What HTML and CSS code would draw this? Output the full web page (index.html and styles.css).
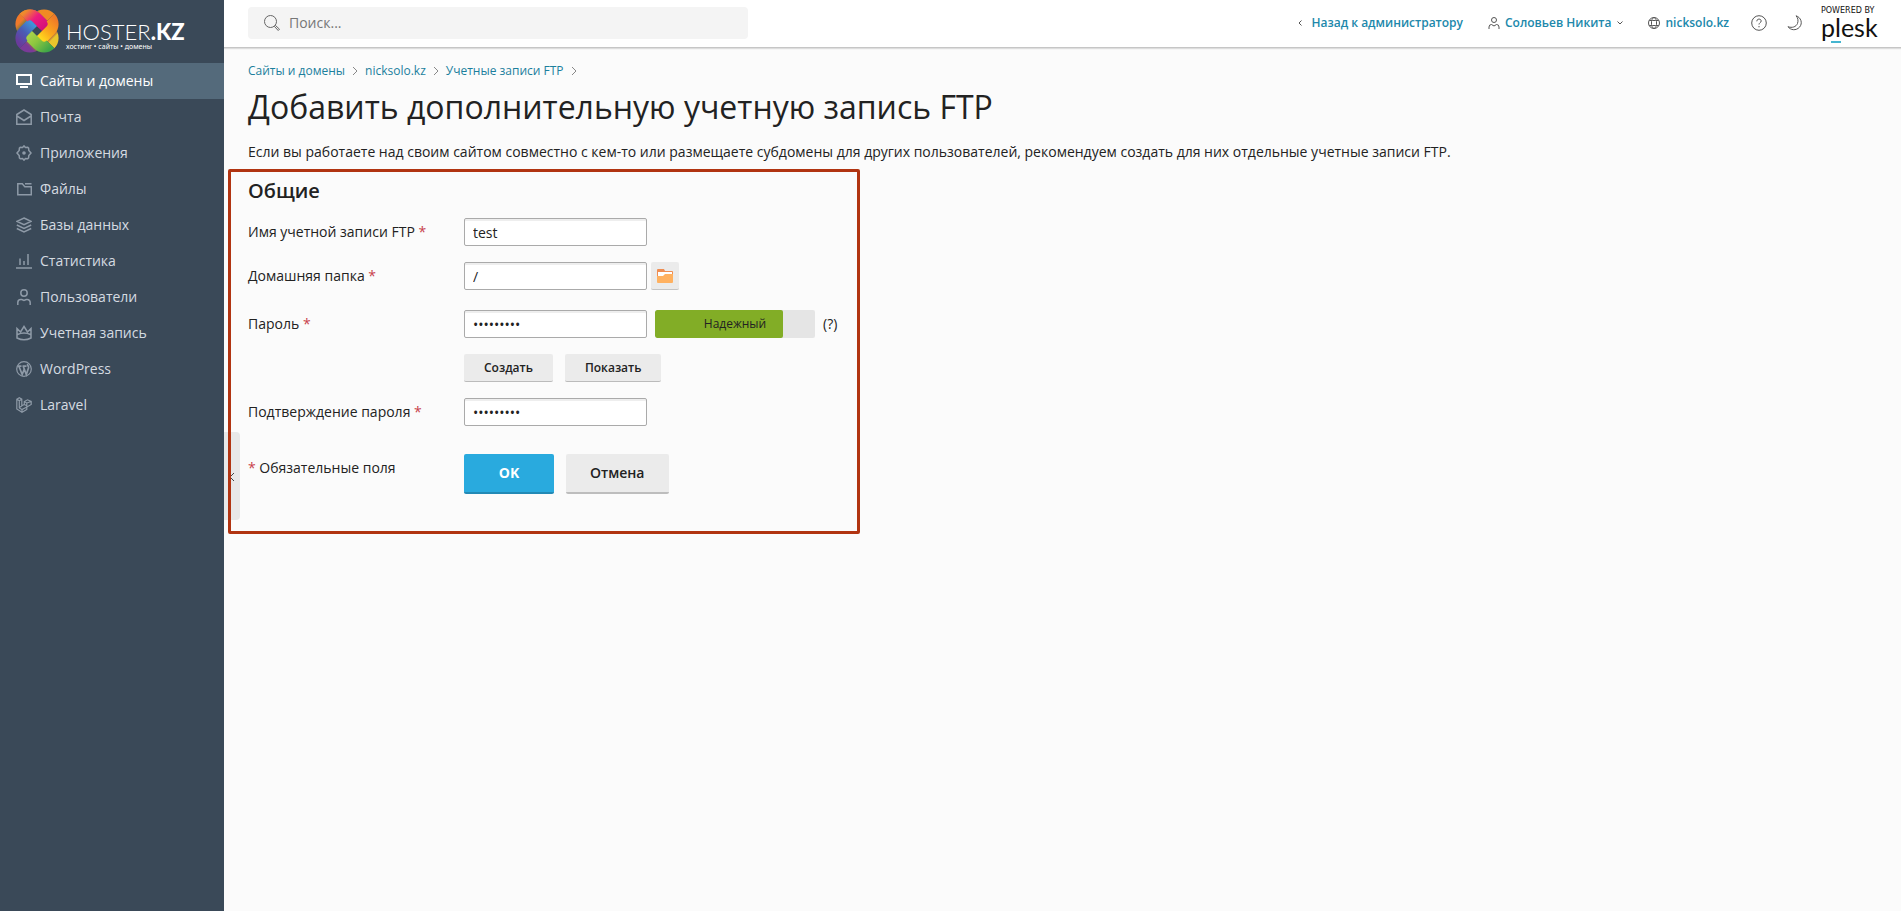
FILE: index.html
```html
<!DOCTYPE html>
<html lang="ru">
<head>
<meta charset="utf-8">
<title>Добавить дополнительную учетную запись FTP</title>
<link rel="stylesheet" href="styles.css">
</head>
<body>
<div class="app">
  <aside class="sidebar">
    <a class="logo" href="#">
      <svg class="logo-mark" viewBox="0 0 42 42" aria-hidden="true">
        <defs>
          <linearGradient id="pink" gradientUnits="userSpaceOnUse" x1="-24" x2="24" y1="0" y2="0"><stop offset=".05" stop-color="#f08a2c"/><stop offset=".28" stop-color="#ec1c7f"/><stop offset=".55" stop-color="#d5107a"/><stop offset=".75" stop-color="#8a1450"/><stop offset=".85" stop-color="#e9c62c"/></linearGradient>
          <linearGradient id="yellow" gradientUnits="userSpaceOnUse" x1="-24" x2="24" y1="0" y2="0"><stop offset=".05" stop-color="#ee7a28"/><stop offset=".35" stop-color="#fba91c"/><stop offset=".55" stop-color="#ffd81e"/><stop offset=".72" stop-color="#b98a10"/><stop offset=".85" stop-color="#7a3a98"/></linearGradient>
          <linearGradient id="green" gradientUnits="userSpaceOnUse" x1="-24" x2="24" y1="0" y2="0"><stop offset=".05" stop-color="#3fa648"/><stop offset=".35" stop-color="#8cc63f"/><stop offset=".55" stop-color="#a8d14a"/><stop offset=".72" stop-color="#2b7a48"/><stop offset=".88" stop-color="#f0792a"/></linearGradient>
          <linearGradient id="blue" gradientUnits="userSpaceOnUse" x1="-24" x2="24" y1="0" y2="0"><stop offset=".05" stop-color="#6a3a9c"/><stop offset=".3" stop-color="#4a5cb4"/><stop offset=".55" stop-color="#3f96da"/><stop offset=".72" stop-color="#1d4c86"/><stop offset=".82" stop-color="#f08a24"/></linearGradient>
        </defs>
        <g fill="none" stroke-width="11" transform="translate(21 21)">
          <path transform="rotate(45)" d="M-19 0a9 9 0 0 1 9-9H10a9 9 0 0 1 9 9" stroke="url(#pink)"/>
          <path transform="rotate(135)" d="M-19 0a9 9 0 0 1 9-9H10a9 9 0 0 1 9 9" stroke="url(#yellow)"/>
          <path transform="rotate(225)" d="M-19 0a9 9 0 0 1 9-9H10a9 9 0 0 1 9 9" stroke="url(#green)"/>
          <path transform="rotate(315)" d="M-19 0a9 9 0 0 1 9-9H10a9 9 0 0 1 9 9" stroke="url(#blue)"/>
          <path transform="rotate(45)" d="M-19 0a9 9 0 0 1 9-9H0" stroke="url(#pink)"/>
        </g>
      </svg>
      <span class="logo-words">
        <span class="logo-name">HOSTER<b>.KZ</b></span>
        <span class="logo-sub">хостинг • сайты • домены</span>
      </span>
    </a>
    <nav class="menu">
      <a class="menu-item active" href="#"><svg class="ico" viewBox="0 0 16 16"><path d="M1 2h14v9H1zM4 14h8" stroke-width="2"/></svg>Сайты и домены</a>
      <a class="menu-item" href="#"><svg class="ico" viewBox="0 0 16 16"><path d="M.8 15.200V5.500L8 1l7.200 4.500v9.700zM1 7l7 4.500L15 7"/></svg>Почта</a>
      <a class="menu-item" href="#"><svg class="ico" viewBox="0 0 16 16"><path d="M6.500 2.500L8 .9l1.500 1.600 2.200-.2.900.9.200 2.300L15 8l-2.200 2.500-.2 2.300-.9.900-2.200-.2L8 15.100l-1.500-1.600-2.200.2-.9-.9-.2-2.300L1 8l2.200-2.500.2-2.300.9-.9z"/><circle cx="8" cy="8" r="1.800" fill="#8e9aa7" stroke="none"/></svg>Приложения</a>
      <a class="menu-item" href="#"><svg class="ico" viewBox="0 0 16 16"><path d="M1.800 2.800h4.500l2.500 3h6.500v8H1.800zM9 2.800h6.500"/></svg>Файлы</a>
      <a class="menu-item" href="#"><svg class="ico" viewBox="0 0 16 16"><path d="M8 1l7 3.300-7 3.400-7-3.400zM.8 8L8 11.400 15.200 8M.8 11.500L8 15l7.200-3.500"/></svg>Базы данных</a>
      <a class="menu-item" href="#"><svg class="ico" viewBox="0 0 16 16"><path d="M0 15h16M4 12V5.500M8 12V8M12 12V1"/></svg>Статистика</a>
      <a class="menu-item" href="#"><svg class="ico" viewBox="0 0 16 16"><circle cx="8" cy="4" r="3.200"/><path d="M1.800 16v-2.500a3 3 0 0 1 3-3h1L8 11.500l2.200-1h1a3 3 0 0 1 3 3V16"/></svg>Пользователи</a>
      <a class="menu-item" href="#"><svg class="ico" viewBox="0 0 16 16"><path d="M1 3.500L4.500 7 8 1.500 11.500 7 15 3.500V13q-7 3.500-14 0zM1.500 9.500q6.500-3 13 0"/></svg>Учетная запись</a>
      <a class="menu-item" href="#"><svg class="ico" viewBox="0 0 16 16"><circle cx="8" cy="8" r="7.300" stroke-width="1.200"/><path d="M2 5.200h3.500M6.500 5.200h4M3 5.500l3.200 8L8.300 8M7.300 5.500l3 8 2.200-6.500c.5-2-1.500-2.500-.8-4" stroke-width="1.700"/></svg>WordPress</a>
      <a class="menu-item" href="#"><svg class="ico" viewBox="0 0 16 16"><path d="M.8 2.200L3.300.8l2.500 1.400v6.600l2.500-1.400V4.500L11.500 2.800l3.700 1.700v3L10.800 10v2.500L6 15.200.8 12zM.8 2.200l2.500 1.500v7.200L6 12.500l4.800-2.500M3.300 3.700l2.500-1.500M6 12.500v2.700M8.300 4.500l2.500 1.500v4M10.800 6l4.400-1.500M8.300 7.400l2.500 1.400M3.300 10.500l2.500-1.600" stroke-width="1.200"/></svg>Laravel</a>
    </nav>
    <button class="collapse" type="button" aria-label="Свернуть меню"><svg viewBox="0 0 6 8"><path d="M5 0L1 4l4 4"/></svg></button>
  </aside>

  <div class="page">
    <header class="topbar">
      <label class="search">
        <svg class="search-ico" viewBox="0 0 16 16"><circle cx="6.500" cy="6.500" r="6"/><path d="M10.500 11.500l1-1 4 3.700-1.300 1.300z"/></svg>
        <input type="search" placeholder="Поиск..." aria-label="Поиск">
      </label>
      <div class="tools">
        <a class="tool back" href="#"><svg class="arrow-left" viewBox="0 0 4 6"><path d="M3.500.5L1 3l2.500 2.500"/></svg>Назад к администратору</a>
        <a class="tool user" href="#"><svg class="tool-ico" viewBox="0 0 12 12"><circle cx="6" cy="3" r="2.500"/><path d="M1 12v-2a2.500 2.500 0 0 1 2.500-2.500L6 9l2.500-1.500A2.500 2.500 0 0 1 11 10v2"/></svg>Соловьев Никита<svg class="arrow-down" viewBox="0 0 6 4"><path d="M.5.5L3 3 5.500.5"/></svg></a>
        <a class="tool site" href="#"><svg class="tool-ico" viewBox="0 0 12 12"><circle cx="6" cy="6" r="5.500"/><rect x="3.500" y="3.500" width="5" height="5" rx="1"/><path d="M3.500 4C4 2 5 .8 6 .5 7 .8 8 2 8.500 4M3.500 8C4 10 5 11.200 6 11.500 7 11.200 8 10 8.500 8M1.300 3.500h2.500M8.200 3.500h2.500M1.300 8.500h2.500M8.200 8.500h2.500"/></svg>nicksolo.kz</a>
        <button class="icon-btn" type="button" aria-label="Справка"><svg viewBox="0 0 16 16"><circle cx="8" cy="8" r="7.300"/><path d="M5.800 6.300C5.800 3.300 10.200 3.500 10.200 6 10.200 7.600 8 7.800 8 9.500M8 11v1.300"/></svg></button>
        <button class="icon-btn moon" type="button" aria-label="Тёмная тема"><svg viewBox="0 0 16 16"><path d="M9 .8c5 1.500 7 7.500 3.500 11.400-3.500 3.800-9 3-11.500-.5 4 1.500 8 .3 9.500-3.200C11.500 5.500 11 3 9 .8z"/></svg></button>
        <a class="plesk" href="#"><span class="powered">POWERED BY</span><span class="plesk-name">plesk</span></a>
      </div>
    </header>

    <main class="content">
      <nav class="crumbs" aria-label="Навигация">
        <a href="#">Сайты и домены</a><svg viewBox="0 0 6 10"><path d="M1 1l4 4-4 4"/></svg>
        <a href="#">nicksolo.kz</a><svg viewBox="0 0 6 10"><path d="M1 1l4 4-4 4"/></svg>
        <a href="#">Учетные записи FTP</a><svg viewBox="0 0 6 10"><path d="M1 1l4 4-4 4"/></svg>
      </nav>
      <h1>Добавить дополнительную учетную запись FTP</h1>
      <p class="intro">Если вы работаете над своим сайтом совместно с кем-то или размещаете субдомены для других пользователей, рекомендуем создать для них отдельные учетные записи FTP.</p>

      <form class="panel">
        <h2>Общие</h2>
        <div class="row">
          <label for="login">Имя учетной записи FTP <i>*</i></label>
          <div class="field"><input id="login" type="text" value="test"></div>
        </div>
        <div class="row home-row">
          <label for="home">Домашняя папка <i>*</i></label>
          <div class="field"><input id="home" type="text" value="/"><button class="folder" type="button" aria-label="Выбрать папку"><svg viewBox="0 0 16 14"><path fill="#ef8d52" d="M0 1a1 1 0 0 1 1-1h6l1 2h7a1 1 0 0 1 1 1v4H0z"/><path fill="#fff" d="M1 3h14v4H1z"/><path fill="#ffb160" d="M0 7h6l2-2h8v8a1 1 0 0 1-1 1H1a1 1 0 0 1-1-1z"/></svg></button></div>
        </div>
        <div class="row">
          <label for="pass">Пароль <i>*</i></label>
          <div class="field"><input id="pass" type="password" value="password1"><span class="strength"><span class="strength-bar"></span><span class="strength-text">Надежный</span></span><span class="hint">(?)</span></div>
        </div>
        <div class="row">
          <span></span>
          <div class="field actions"><button class="small-btn" type="button">Создать</button><button class="small-btn" type="button">Показать</button></div>
        </div>
        <div class="row last">
          <label for="confirm">Подтверждение пароля <i>*</i></label>
          <div class="field"><input id="confirm" type="password" value="password1"></div>
        </div>
        <div class="row">
          <span class="required"><i>*</i> Обязательные поля</span>
          <div class="field actions"><button class="btn primary" type="submit">OK</button><button class="btn" type="button">Отмена</button></div>
        </div>
      </form>
    </main>
  </div>
</div>
</body>
</html>
```
FILE: styles.css
```css
* { box-sizing: border-box; }
body { margin: 0; font: 14px/20px "Open Sans", "Noto Sans", sans-serif; color: #222; background: #fbfbfb; }
a { color: #1c7f9d; text-decoration: none; }
button, input { font: inherit; color: inherit; }
button { cursor: pointer; border: 0; padding: 0; }
svg { flex: none; fill: none; stroke: currentColor; }
.app { display: flex; min-height: 100vh; }

.sidebar { position: relative; flex: none; width: 224px; background: #3a4958; }
.logo { display: flex; height: 63px; padding: 10px 0 0 16px; gap: 8px; color: #fff; }
.logo-mark { width: 42px; height: 42px; overflow: visible; }
.logo-words { display: flex; flex-direction: column; font-family: Lato, sans-serif; padding-top: 10px; }
.logo-name { font-size: 22px; line-height: 23px; font-weight: 300; }
.logo-name b { font-weight: 900; }
.logo-sub { font: 7px/8px "Noto Sans", sans-serif; }
.menu-item { display: flex; align-items: center; gap: 8px; height: 36px; padding-left: 16px; padding-bottom: 1px; color: #d5dbe1; font-weight: 500; }
.menu-item.active { background: #546a7b; color: #fff; }
.ico { width: 16px; height: 16px; stroke: #8e9aa7; stroke-width: 1.5; }
.active .ico { stroke: #fff; }
.collapse { position: absolute; left: 100%; top: 432px; width: 16px; height: 88px; border-radius: 0 4px 4px 0; background: #e8e8e8; color: #444; }
.collapse svg { width: 6px; height: 8px; }

.page { flex: 1; min-width: 0; }
.topbar { display: flex; justify-content: space-between; height: 48px; padding: 7px 20px 0 24px; background: #fff; border-bottom: 1px solid #c6c6c6; box-shadow: 0 1px 1px #ddd; }
.search { display: flex; align-items: center; gap: 9px; width: 500px; height: 32px; padding-left: 16px; border-radius: 4px; background: #f4f4f4; }
.search-ico { width: 16px; height: 16px; stroke: #666; }
.search input { flex: 1; border: 0; padding: 0; background: none; outline: 0; }
.search input::placeholder { color: #777; opacity: 1; }
.tools { display: flex; height: 32px; align-items: center; font-size: 12px; font-weight: 600; }
.tool { display: flex; align-items: center; color: #2088ab; }
.tool svg, .icon-btn { color: #555; }
.tool-ico { width: 12px; height: 12px; margin-right: 5px; }
.arrow-left { width: 4px; height: 6px; margin-right: 9px; }
.arrow-down { width: 6px; height: 4px; margin-left: 6px; }
.user, .site { margin-left: 25px; }
.icon-btn { width: 16px; height: 16px; margin-left: 22px; background: none; }
.icon-btn svg { display: block; width: 16px; height: 16px; }
.moon { margin-left: 20px; }
.plesk { display: flex; flex-direction: column; width: 60px; margin-left: 18px; color: #111; font-weight: 400; }
.powered { font: 8px/8px "DejaVu Sans", sans-serif; }
.plesk-name { font: 25px/24px Lato, sans-serif; height: 29px; margin-bottom: -5px; background: linear-gradient(#45b5d0, #45b5d0) 10px 26px / 10px 2px no-repeat; }

.content { padding: 14px 24px; }
.crumbs { display: flex; align-items: center; gap: 7px; height: 18px; font-size: 12px; }
.crumbs svg { width: 6px; height: 10px; stroke: #888; }
h1 { margin: 5px 0 0; font-size: 32px; line-height: 44px; font-weight: 400; }
.intro { margin: 13px 0 7px; }
.panel { position: relative; width: 632px; margin-left: -20px; padding: 8px 17px 37px; border: 3px solid #b13411; border-radius: 2px; }
h2 { margin: 0 0 16px; font-size: 20px; line-height: 22px; font-weight: 600; }
.row { display: grid; grid-template-columns: 216px 1fr; margin-bottom: 16px; }
.row label { padding-top: 4px; }
.row i { font-style: normal; color: #c8414b; }
.home-row { margin-bottom: 20px; }
.row.last { margin-bottom: 28px; }
.row:last-child { margin-bottom: 0; }
.field { display: flex; align-items: center; }
.field input { width: 183px; height: 28px; padding: 1px 8px; border: 1px solid #aaa; border-radius: 2px; background: #fff; box-shadow: inset 0 2px 0 #eee; }
.folder { display: grid; place-items: center; width: 28px; height: 28px; margin-left: 4px; border-radius: 2px; background: #ebebeb; border-bottom: 1px solid #c4c4c4; }
.folder svg { width: 16px; height: 14px; stroke: none; }
.strength { position: relative; width: 160px; height: 28px; margin-left: 8px; border-radius: 2px; background: #e5e5e5; text-align: center; font-size: 12px; line-height: 28px; overflow: hidden; }
.strength-bar { display: block; width: 80%; height: 28px; border-radius: 2px; background: #82ad26; }
.strength-text { position: absolute; inset: 0; }
.hint { margin-left: 8px; }
.actions { gap: 12px; }
.small-btn { height: 28px; padding: 0 20px; border-radius: 2px; background: #ebebeb; border-bottom: 1px solid #bbb; font-size: 12px; font-weight: 600; }
.btn { height: 40px; min-width: 90px; padding: 0 24px; border-radius: 2px; background: #ebebeb; border-bottom: 2px solid #bdbdbd; font-weight: 600; }
.primary { background: #29aade; border-color: #2389b5; color: #fff; font-weight: 700; }
.required { padding-top: 4px; }
```
